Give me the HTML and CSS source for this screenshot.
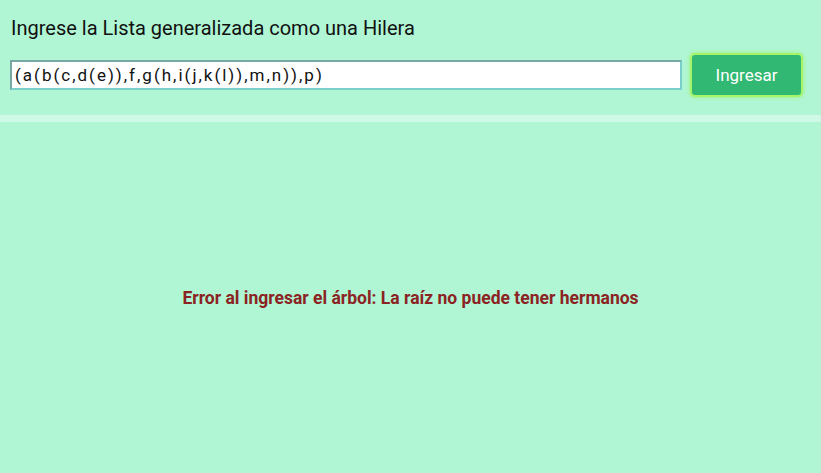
FILE: index.html
```html
<!DOCTYPE html>
<html lang="es">
<head>
<meta charset="utf-8">
<link rel="stylesheet" href="styles.css">
</head>
<body>
<div class="top">
  <label class="title" for="lista">Ingrese la Lista generalizada como una Hilera</label>
  <div class="row">
    <input id="lista" class="field" type="text" value="(a(b(c,d(e)),f,g(h,i(j,k(l)),m,n)),p)">
    <button class="btn">Ingresar</button>
  </div>
</div>
<div class="divider"></div>
<div class="result">
  <p class="error">Error al ingresar el árbol: La raíz no puede tener hermanos</p>
</div>
</body>
</html>
```
FILE: styles.css
```css
html, body {
  margin: 0;
  padding: 0;
  background: #b0f6d4;
  font-family: Roboto, "Liberation Sans", sans-serif;
  height: 100%;
}
.top {
  padding: 16px 18px 18px 10px;
}
.title {
  display: block;
  font-size: 20px;
  color: #111;
  margin-left: 1px;
  line-height: 24px;
}
.row {
  display: flex;
  align-items: center;
  gap: 8px;
  margin-top: 13px;
}
.field {
  flex: 1;
  height: 30px;
  box-sizing: border-box;
  border: 2px solid #7ad0c8;
  border-top-color: #78a8a4;
  border-left-color: #78a8a4;
  background: #fff;
  font-family: Roboto, "Liberation Sans", sans-serif;
  font-size: 17px;
  letter-spacing: 2px;
  padding: 0 3px;
  color: #111;
  outline: none;
}
.btn {
  width: 113px;
  height: 44px;
  border: 2px solid #a4f56a;
  border-radius: 5px;
  background: #31b872;
  color: #fff;
  font-family: Roboto, "Liberation Sans", sans-serif;
  font-size: 17px;
  box-shadow: 0 0 4px #a0f070;
}
.divider {
  height: 7px;
  background: #d0f8e6;
}
.result {
  display: flex;
  justify-content: center;
  padding-top: 166px;
}
.error {
  margin: 0;
  font-size: 17.5px;
  font-weight: bold;
  color: #8b2323;
}
```
